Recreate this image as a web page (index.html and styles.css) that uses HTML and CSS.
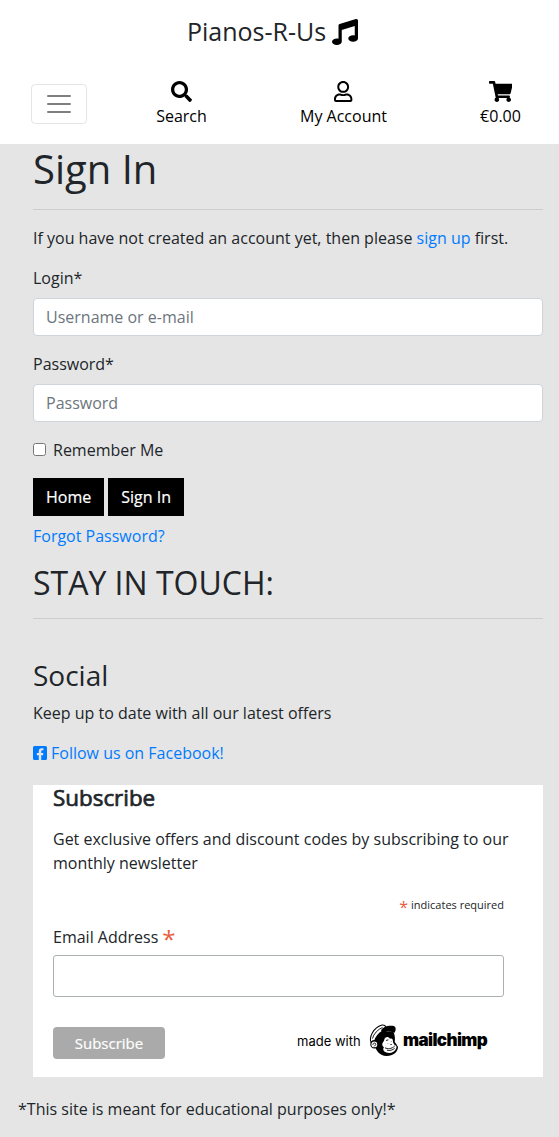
FILE: index.html
```html
<!DOCTYPE html>
<html lang="en">
<head>
<meta charset="utf-8">
<title>Pianos-R-Us</title>
<link rel="stylesheet" href="styles.css">
</head>
<body>
<header class="site-header">
  <a class="brand" href="#"><span>Pianos-R-Us</span>
    <svg class="brand-icon" viewBox="0 0 512 512"><path d="M511.99 32.01c0-21.71-21.1-37.01-41.6-30.51L150.4 96c-13.3 4.2-22.4 16.5-22.4 30.5v261.42c-10.05-2.38-20.72-3.92-32-3.92-53.02 0-96 28.65-96 64s42.98 64 96 64 96-28.65 96-64V214.31l256-75.02v184.63c-10.05-2.38-20.72-3.92-32-3.92-53.02 0-96 28.65-96 64s42.98 64 96 64 96-28.65 96-64l-.01-351.99z"/></svg>
  </a>
  <nav class="nav">
    <button class="toggler" aria-label="Menu"><svg viewBox="0 0 30 30"><path stroke="rgba(0,0,0,.5)" stroke-linecap="round" stroke-miterlimit="10" stroke-width="2" d="M4 7h22M4 15h22M4 23h22"/></svg></button>
    <a class="nav-item search" href="#"><svg viewBox="0 0 512 512"><path d="M505 442.700L405.300 343c-4.500-4.500-10.600-7-17-7H372c27.600-35.300 44-79.700 44-128C416 93.100 322.900 0 208 0S0 93.100 0 208s93.100 208 208 208c48.300 0 92.700-16.400 128-44v16.300c0 6.400 2.500 12.500 7 17l99.700 99.700c9.400 9.400 24.600 9.400 33.900 0l28.300-28.300c9.400-9.400 9.400-24.600.1-34zM208 336c-70.700 0-128-57.200-128-128 0-70.700 57.200-128 128-128 70.700 0 128 57.200 128 128 0 70.700-57.200 128-128 128z"/></svg><span>Search</span></a>
    <a class="nav-item account" href="#"><svg viewBox="0 0 448 512"><path d="M313.600 304c-28.700 0-42.500 16-89.600 16-47.100 0-60.800-16-89.600-16C60.200 304 0 364.200 0 438.400V464c0 26.500 21.500 48 48 48h352c26.500 0 48-21.500 48-48v-25.600c0-74.200-60.200-134.400-134.400-134.400zM400 464H48v-25.600c0-47.600 38.800-86.400 86.400-86.400 14.600 0 38.300 16 89.600 16 51.700 0 74.900-16 89.600-16 47.600 0 86.400 38.800 86.400 86.400V464zM224 288c79.500 0 144-64.500 144-144S303.500 0 224 0 80 64.500 80 144s64.500 144 144 144zm0-240c52.900 0 96 43.100 96 96s-43.100 96-96 96-96-43.100-96-96 43.100-96 96-96z"/></svg><span>My Account</span></a>
    <a class="nav-item cart" href="#"><svg viewBox="0 0 576 512"><path d="M528.120 301.319l47.273-208C578.806 78.301 567.391 64 551.990 64H159.208l-9.166-44.810C147.758 8.021 137.930 0 126.529 0H24C10.745 0 0 10.745 0 24v16c0 13.255 10.745 24 24 24h69.883l70.248 343.435C147.325 417.100 136 435.222 136 456c0 30.928 25.072 56 56 56s56-25.072 56-56c0-15.674-6.447-29.835-16.824-40h209.647C430.447 426.165 424 440.326 424 456c0 30.928 25.072 56 56 56s56-25.072 56-56c0-22.172-12.888-41.332-31.579-50.405l5.517-24.276c3.413-15.018-8.002-29.319-23.403-29.319H218.117l-6.545-32h293.145c11.206 0 20.920-7.754 23.403-18.681z"/></svg><span>€0.00</span></a>
  </nav>
</header>
<main class="content">
  <h1>Sign In</h1>
  <hr>
  <p>If you have not created an account yet, then please <a href="#">sign up</a> first.</p>
  <form>
    <div class="field"><label for="login">Login*</label><input id="login" type="text" placeholder="Username or e-mail"></div>
    <div class="field"><label for="password">Password*</label><input id="password" type="password" placeholder="Password"></div>
    <label class="remember"><input type="checkbox">Remember Me</label>
    <div class="actions"><button class="btn" type="button">Home</button><button class="btn" type="button">Sign In</button></div>
    <a class="forgot" href="#">Forgot Password?</a>
  </form>
  <h2>STAY IN TOUCH:</h2>
  <hr>
  <section class="social">
    <h3>Social</h3>
    <p>Keep up to date with all our latest offers</p>
    <a class="facebook" href="#"><svg viewBox="0 0 448 512"><path d="M400 32H48A48 48 0 0 0 0 80v352a48 48 0 0 0 48 48h137.250V327.690h-63V256h63v-54.640c0-62.150 37-96.480 93.670-96.480 27.140 0 55.520 4.840 55.520 4.840v61h-31.270c-30.810 0-40.420 19.120-40.420 38.730V256h68.780l-11 71.690h-57.780V480H400a48 48 0 0 0 48-48V80a48 48 0 0 0-48-48z"/></svg><span>Follow us on Facebook!</span></a>
  </section>
  <section class="subscribe">
    <h4>Subscribe</h4>
    <p>Get exclusive offers and discount codes by subscribing to our monthly newsletter</p>
    <div class="required"><span class="star">*</span> indicates required</div>
    <label class="email-label" for="email">Email Address <span class="star">*</span></label>
    <input class="email" id="email" type="email">
    <div class="subscribe-row">
      <button class="subscribe-btn" type="button">Subscribe</button>
      <a class="mailchimp" href="#">
        <span class="made">made with</span>
        <svg class="chimp" viewBox="0 0 32 34">
          <path d="M4 20C5 14 9 9 14 8l11-.5c2 4 2 8 1.500 11 2 2 2.500 4 3.500 5-.2 6-6 9.800-12 9.500C11 32.500 8 28 7 25c-3-.5-4-3-3-5z"/>
          <path class="face" d="M16.500 14.500c2-2 4.500-1 5 .7 2-1 3.300.2 3.200 2.500 0 2 1.400 2.800 2 4.300 1.800 0 2 1.500 1.500 3-1.400 4-6.200 5.800-10.200 4.500-3.500-1.100-4-4-2.500-5.500-2-1.500-2.500-3.500-1-5.300 1.500-1.400 1-3 2-4.200z"/>
          <path class="outline" d="M2.200 19C-.5 13 5 4 12.500 1.300c2-.8 4 .5 5 1.200l-3.500 5C9.500 10 7 14 5.800 17.500c-1.500-.4-2.600.3-3.600 1.500z"/>
          <path class="thin" d="M3.500 15C5 10 9 5.500 14 3.500"/>
          <path d="M12.500 6.500C14 3 20 1 25.500 2c2.600.8 2.600 4.500.8 7-3-1.500-8-2.500-12.300 1z"/>
          <circle class="outline" cx="5.500" cy="21" r="3.600"/>
          <path class="thin" d="M4 21.500c0-2.500 3-2.500 3-.5l-1.500 2M17.500 17l2.500-.7M19.500 20l.1.400M23 18l.3.400M16.500 24.500c2.500 1.500 7 1.300 10-1.800M18.500 27c3 .8 6-.1 8-2M22 21l1.500.2"/>
        </svg>
        <span class="wordmark">mailchimp</span>
      </a>
    </div>
  </section>
</main>
<footer class="footer">*This site is meant for educational purposes only!*</footer>
</body>
</html>
```
FILE: styles.css
```css
* { box-sizing: border-box; }
body { margin: 0; background: #e5e5e5; color: #212529; font: 400 16px/24px "Open Sans", "Noto Sans", sans-serif; }
a { color: #007bff; text-decoration: none; }
h1, h2, h3, h4, p { margin: 0; font-weight: 400; }
svg { display: block; }
input, button { font-family: inherit; }
hr { margin: 16px 0; border: 0; border-top: 1px solid rgba(0,0,0,.1); }

.site-header { height: 144px; padding-top: 14px; background: #fff; }
.brand { display: flex; justify-content: center; align-items: center; gap: 6px; height: 36px; padding-right: 14px; color: #212529; font-size: 25px; }
.brand span { margin-top: -2px; }
.brand-icon { width: 26px; height: 26px; fill: #000; }
.nav { display: flex; align-items: flex-start; padding: 30px 0 0 31px; }
.toggler { display: flex; width: 56px; height: 40px; margin-top: 4px; padding: 4px 12px; border: 1px solid rgba(0,0,0,.1); border-radius: 4px; background: none; }
.toggler svg { width: 30px; height: 30px; fill: none; }
.nav-item { display: flex; flex-direction: column; align-items: center; width: 52px; color: #000; }
.nav-item svg { height: 21px; margin: 1px 0 2px; }
.search { margin-left: 68.500px; }
.account { width: 88px; margin-left: 92px; }
.cart { width: 42px; margin-left: 92px; }

.content { padding: 1px 16px 0 33px; }
h1 { font-size: 40px; line-height: 48px; }
form { margin-top: 16px; }
.field { margin-bottom: 16px; }
.field label { display: block; margin-bottom: 8px; }
.field input { display: block; width: 100%; height: 38px; padding: 6px 12px; border: 1px solid #ced4da; border-radius: 4px; background: #fff; font-size: 16px; }
.field input::placeholder { color: #6c757d; opacity: 1; }
.remember { display: flex; align-items: center; }
.remember input { width: 13px; height: 13px; margin: 0 7px 2px 0; }
.actions { display: flex; gap: 4px; margin: 16px 0 8px; }
.btn { height: 38px; padding: 0 13px; border: 0; background: #000; color: #fff; font-size: 16px; -webkit-text-stroke: .2px #fff; }
.forgot { display: block; }
h2 { margin-top: 16px; font-size: 32px; line-height: 38px; }
.social { margin-top: 39px; }
.social h3 { margin-bottom: 9px; font-size: 28px; line-height: 34px; }
.facebook { display: flex; align-items: center; gap: 4px; margin-top: 16px; }
.facebook svg { width: 14px; height: 16px; fill: #007bff; }
.subscribe { height: 292px; margin-top: 20px; padding: 0 39px 0 20px; background: #fff; }
.subscribe h4 { margin-bottom: 17px; font-size: 22.400px; line-height: 25px; -webkit-text-stroke: .7px #212529; }
.subscribe p { margin-right: -10px; }
.star { color: #e85c41; }
.required { display: flex; justify-content: flex-end; align-items: center; gap: 3px; height: 20px; margin-top: 20px; font-size: 11px; }
.required .star { padding-top: 4px; font-size: 16px; }
.email-label { display: flex; gap: 4px; height: 24px; margin-top: 10px; }
.email-label .star { padding-top: 2px; font-size: 24px; }
.email { display: block; width: 100%; height: 42px; margin-top: 6px; padding: 8px; border: 1px solid #abb0b2; border-radius: 3px; background: #fff; }
.subscribe-row { display: flex; justify-content: space-between; margin-top: 24px; padding-right: 16px; }
.subscribe-btn { width: 112px; height: 32px; margin-top: 6px; padding: 0; border: 0; border-radius: 4px; background: #aaa; color: #fff; font-size: 15px; -webkit-text-stroke: .2px #fff; }
.mailchimp { display: flex; align-items: center; height: 38px; color: #000; }
.made { width: 72px; padding-top: 2px; font: 13px/20px Inter, sans-serif; }
.chimp { width: 31px; height: 33px; }
.wordmark { width: 85px; margin-left: 3px; font: 900 17px/20px Inter, sans-serif; letter-spacing: -.6px; }
.face { fill: #fff; }
.outline { fill: #fff; stroke: #000; stroke-width: 1.1; }
.thin { fill: none; stroke: #000; stroke-width: .9; }
.footer { margin: 20px 18px 0; padding-bottom: 16px; }
```
